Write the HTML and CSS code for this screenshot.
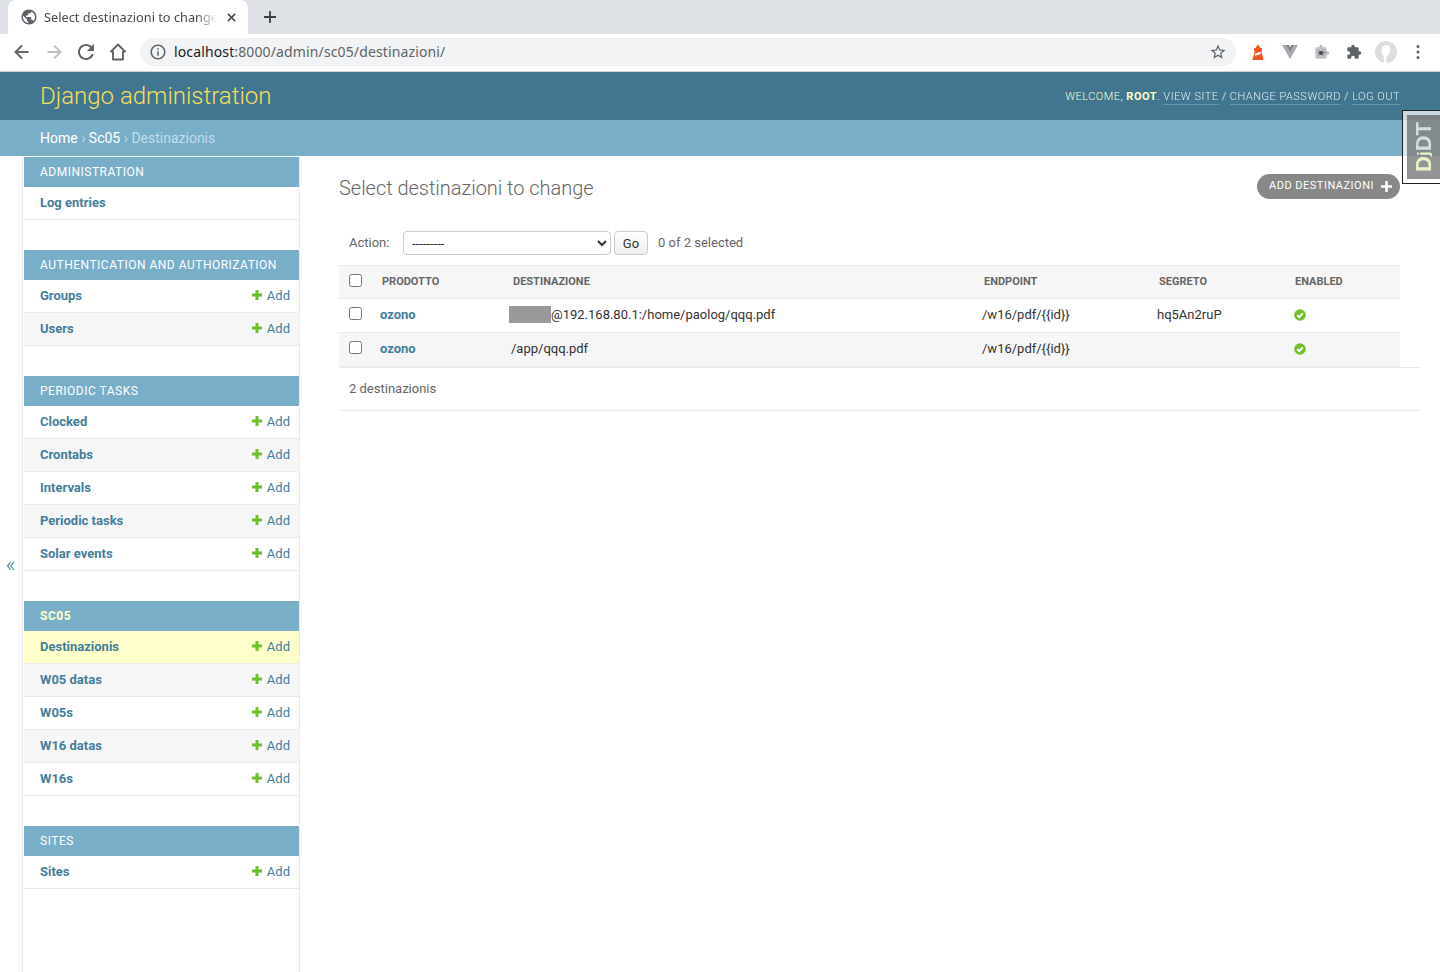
FILE: index.html
```html
<!DOCTYPE html>
<html lang="en">
<head>
<meta charset="utf-8">
<title>Select destinazioni to change</title>
<link rel="stylesheet" href="styles.css">
</head>
<body>
<div class="browser">
  <div class="tabstrip">
    <div class="tab">
      <svg class="favicon" viewBox="0 0 24 24"><path fill="#5f6368" d="M12 2C6.480 2 2 6.480 2 12s4.480 10 10 10 10-4.480 10-10S17.520 2 12 2zm-1 17.930c-3.950-.49-7-3.850-7-7.930 0-.62.08-1.210.21-1.790L9 15v1c0 1.100.9 2 2 2v1.930zm6.900-2.540c-.26-.81-1-1.390-1.900-1.390h-1v-3c0-.55-.45-1-1-1H8v-2h2c.55 0 1-.45 1-1V7h2c1.100 0 2-.9 2-2v-.41c2.930 1.190 5 4.060 5 7.410 0 2.080-.8 3.970-2.100 5.390z"/></svg>
      <span class="tab-title">Select destinazioni to change</span>
      <svg class="tab-close" viewBox="0 0 10 10"><path d="M1 1l8 8M9 1l-8 8" stroke="#45484d" stroke-width="1.700" fill="none"/></svg>
    </div>
    <svg class="new-tab" viewBox="0 0 12 12"><path d="M6 0v12M0 6h12" stroke="#3c4043" stroke-width="1.800" fill="none"/></svg>
  </div>
  <div class="toolbar">
    <svg class="tb-icon" viewBox="0 0 24 24"><path d="M18.500 12H6M12 5.500L5.500 12l6.500 6.500" stroke="#5f6368" stroke-width="1.900" fill="none"/></svg>
    <svg class="tb-icon" viewBox="0 0 24 24"><path d="M5.500 12H18M12 5.500l6.500 6.500-6.500 6.500" stroke="#bdc1c6" stroke-width="1.900" fill="none"/></svg>
    <svg class="tb-icon" viewBox="0 0 24 24"><path fill="#5f6368" d="M17.650 6.350C16.200 4.900 14.210 4 12 4c-4.420 0-7.990 3.580-7.990 8s3.570 8 7.990 8c3.730 0 6.840-2.550 7.730-6h-2.080c-.82 2.330-3.040 4-5.650 4-3.310 0-6-2.690-6-6s2.690-6 6-6c1.660 0 3.140.69 4.220 1.780L13 11h7V4l-2.350 2.350z"/></svg>
    <svg class="tb-icon" viewBox="0 0 24 24"><path d="M12 4.500L5 11.500h2v8h10v-8h2z" stroke="#5f6368" stroke-width="1.900" stroke-linejoin="round" fill="none"/></svg>
    <div class="omnibox">
      <svg class="info" viewBox="0 0 24 24"><path fill="#5f6368" d="M11 7h2v2h-2zm0 4h2v6h-2zm1-9C6.480 2 2 6.480 2 12s4.480 10 10 10 10-4.480 10-10S17.520 2 12 2zm0 18c-4.410 0-8-3.590-8-8s3.590-8 8-8 8 3.590 8 8-3.590 8-8 8z"/></svg>
      <span class="url"><span class="host">localhost</span>:8000/admin/sc05/destinazioni/</span>
      <svg class="star" viewBox="0 0 24 24"><path fill="#5f6368" d="M22 9.240l-7.190-.62L12 2 9.190 8.630 2 9.240l5.460 4.730L5.820 21 12 17.270 18.180 21l-1.630-7.030L22 9.240zM12 15.400l-3.760 2.270 1-4.280-3.320-2.880 4.380-.38L12 6.100l1.710 4.040 4.380.38-3.320 2.880 1 4.280L12 15.400z"/></svg>
    </div>
    <div class="extensions">
      <svg class="ext" viewBox="0 0 16 16"><path fill="#f4511e" d="M6 3l2-2.500L10 3v1h2v2.500h-.8L13.500 16h-11l2.300-9.500H4V4h2z"/><path fill="#fff" d="M5.200 9.500l5.200-1.800.5 2.200-6.200 2.100z"/></svg>
      <svg class="ext" viewBox="0 0 16 16"><path fill="#a6a9ad" d="M0 1h4.500L8 7l3.500-6H16L8 15z"/><path fill="#808488" d="M4 1h2.800L8 3.200 9.200 1H12L8 8z"/></svg>
      <svg class="ext" viewBox="0 0 24 24"><path fill="#bfc1c4" d="M20.500 11H19V7c0-1.100-.9-2-2-2h-4V3.500C13 2.120 11.880 1 10.500 1S8 2.120 8 3.500V5H4c-1.100 0-2 .9-2 2v13c0 1.100.9 2 2 2h13c1.100 0 2-.9 2-2v-4h1.500c1.380 0 2.500-1.120 2.500-2.500S21.880 11 20.500 11z"/><path d="M6 9l4 3M15 9l-4 3M5 13h13M6 18l4-4M15 18l-4-4" stroke="#6a6d71" stroke-width="1.200" fill="none"/><circle cx="10.500" cy="13.500" r="3" fill="#44474b"/></svg>
      <svg class="ext" viewBox="0 0 24 24"><path fill="#5f6368" d="M20.500 11H19V7c0-1.100-.9-2-2-2h-4V3.500C13 2.120 11.880 1 10.500 1S8 2.120 8 3.500V5H4c-1.100 0-1.990.9-1.990 2v3.800H3.500c1.490 0 2.700 1.210 2.700 2.700s-1.210 2.700-2.700 2.700H2V20c0 1.100.9 2 2 2h3.800v-1.500c0-1.490 1.210-2.700 2.700-2.700 1.490 0 2.700 1.210 2.700 2.700V22H17c1.100 0 2-.9 2-2v-4h1.500c1.380 0 2.500-1.120 2.500-2.500S21.880 11 20.500 11z"/></svg>
      <svg class="avatar" viewBox="0 0 22 22"><circle cx="11" cy="11" r="11" fill="#dcdde0"/><path fill="#fff" d="M11 4c3 0 4.500 2.500 4 6-.4 2.800-2 4.500-3.500 5.500-.5 2 0 4.500 0 6.500H9c.5-2.500 0-5-.5-7C7 13 6.300 11 6.500 9 6.800 6 8.500 4 11 4z"/></svg>
      <svg class="menu-dots" viewBox="0 0 4 16"><circle cx="2" cy="2.500" r="1.500" fill="#5f6368"/><circle cx="2" cy="8" r="1.500" fill="#5f6368"/><circle cx="2" cy="13.500" r="1.500" fill="#5f6368"/></svg>
    </div>
  </div>
</div>

<header class="site-header">
  <div class="branding">Django administration</div>
  <div class="user-tools">Welcome, <strong class="user-name">root</strong>. <a class="tool-link" href="#">View site</a> / <a class="tool-link" href="#">Change password</a> / <a class="tool-link" href="#">Log out</a></div>
</header>
<div class="breadcrumbs"><a href="#">Home</a> › <a href="#">Sc05</a> › Destinazionis</div>

<div class="djdt"><div class="djdt-inner"><span class="djdt-text"><span class="djdt-d">D<span class="djdt-j">j</span></span>DT</span></div></div>

<div class="main">
  <div class="toggle"><span>«</span></div>
  <nav class="sidebar">
    <section class="module">
      <h2 class="caption">Administration</h2>
      <div class="row"><a class="model" href="#">Log entries</a></div>
    </section>
    <section class="module">
      <h2 class="caption">Authentication and Authorization</h2>
      <div class="row"><a class="model" href="#">Groups</a><a class="add" href="#"><svg class="plus" viewBox="0 0 10 10"><path d="M3.500 0h3v3.500H10v3H6.500V10h-3V6.500H0v-3h3.500z" fill="#70bf2b"/></svg>Add</a></div>
      <div class="row alt"><a class="model" href="#">Users</a><a class="add" href="#"><svg class="plus" viewBox="0 0 10 10"><path d="M3.500 0h3v3.500H10v3H6.500V10h-3V6.500H0v-3h3.500z" fill="#70bf2b"/></svg>Add</a></div>
    </section>
    <section class="module">
      <h2 class="caption">Periodic Tasks</h2>
      <div class="row"><a class="model" href="#">Clocked</a><a class="add" href="#"><svg class="plus" viewBox="0 0 10 10"><path d="M3.500 0h3v3.500H10v3H6.500V10h-3V6.500H0v-3h3.500z" fill="#70bf2b"/></svg>Add</a></div>
      <div class="row alt"><a class="model" href="#">Crontabs</a><a class="add" href="#"><svg class="plus" viewBox="0 0 10 10"><path d="M3.500 0h3v3.500H10v3H6.500V10h-3V6.500H0v-3h3.500z" fill="#70bf2b"/></svg>Add</a></div>
      <div class="row"><a class="model" href="#">Intervals</a><a class="add" href="#"><svg class="plus" viewBox="0 0 10 10"><path d="M3.500 0h3v3.500H10v3H6.500V10h-3V6.500H0v-3h3.500z" fill="#70bf2b"/></svg>Add</a></div>
      <div class="row alt"><a class="model" href="#">Periodic tasks</a><a class="add" href="#"><svg class="plus" viewBox="0 0 10 10"><path d="M3.500 0h3v3.500H10v3H6.500V10h-3V6.500H0v-3h3.500z" fill="#70bf2b"/></svg>Add</a></div>
      <div class="row"><a class="model" href="#">Solar events</a><a class="add" href="#"><svg class="plus" viewBox="0 0 10 10"><path d="M3.500 0h3v3.500H10v3H6.500V10h-3V6.500H0v-3h3.500z" fill="#70bf2b"/></svg>Add</a></div>
    </section>
    <section class="module">
      <h2 class="caption current">Sc05</h2>
      <div class="row selected"><a class="model" href="#">Destinazionis</a><a class="add" href="#"><svg class="plus" viewBox="0 0 10 10"><path d="M3.500 0h3v3.500H10v3H6.500V10h-3V6.500H0v-3h3.500z" fill="#70bf2b"/></svg>Add</a></div>
      <div class="row alt"><a class="model" href="#">W05 datas</a><a class="add" href="#"><svg class="plus" viewBox="0 0 10 10"><path d="M3.500 0h3v3.500H10v3H6.500V10h-3V6.500H0v-3h3.500z" fill="#70bf2b"/></svg>Add</a></div>
      <div class="row"><a class="model" href="#">W05s</a><a class="add" href="#"><svg class="plus" viewBox="0 0 10 10"><path d="M3.500 0h3v3.500H10v3H6.500V10h-3V6.500H0v-3h3.500z" fill="#70bf2b"/></svg>Add</a></div>
      <div class="row alt"><a class="model" href="#">W16 datas</a><a class="add" href="#"><svg class="plus" viewBox="0 0 10 10"><path d="M3.500 0h3v3.500H10v3H6.500V10h-3V6.500H0v-3h3.500z" fill="#70bf2b"/></svg>Add</a></div>
      <div class="row"><a class="model" href="#">W16s</a><a class="add" href="#"><svg class="plus" viewBox="0 0 10 10"><path d="M3.500 0h3v3.500H10v3H6.500V10h-3V6.500H0v-3h3.500z" fill="#70bf2b"/></svg>Add</a></div>
    </section>
    <section class="module">
      <h2 class="caption">Sites</h2>
      <div class="row"><a class="model" href="#">Sites</a><a class="add" href="#"><svg class="plus" viewBox="0 0 10 10"><path d="M3.500 0h3v3.500H10v3H6.500V10h-3V6.500H0v-3h3.500z" fill="#70bf2b"/></svg>Add</a></div>
    </section>
  </nav>
  <main class="content">
    <div class="title-row">
      <h1 class="page-title">Select destinazioni to change</h1>
      <a class="addlink" href="#">Add destinazioni<svg class="addlink-plus" viewBox="0 0 10 10"><path d="M3.800 0h2.400v3.800H10v2.400H6.200V10H3.800V6.200H0V3.800h3.800z" fill="#fff"/></svg></a>
    </div>
    <div class="actions">
      <label class="action-label" for="action">Action:</label>
      <select class="action-select" id="action"><option>---------</option></select>
      <button class="go" type="button">Go</button>
      <span class="counter">0 of 2 selected</span>
    </div>
    <table class="result">
      <colgroup><col class="c1"><col class="c2"><col class="c3"><col class="c4"><col class="c5"><col></colgroup>
      <thead>
        <tr><th class="check"><input type="checkbox"></th><th>Prodotto</th><th>Destinazione</th><th>Endpoint</th><th>Segreto</th><th class="last">Enabled</th></tr>
      </thead>
      <tbody>
        <tr><td class="check"><input type="checkbox"></td><td><a class="link" href="#">ozono</a></td><td class="dest"><span class="redact"></span>@192.168.80.1:/home/paolog/qqq.pdf</td><td>/w16/pdf/{{id}}</td><td>hq5An2ruP</td><td><svg class="yes" viewBox="0 0 12 12"><circle cx="6" cy="6" r="5.800" fill="#70bf2b"/><path d="M3.200 6.200L5.200 8.200 8.800 4.400" stroke="#fff" stroke-width="1.800" fill="none"/></svg></td></tr>
        <tr class="alt"><td class="check"><input type="checkbox"></td><td><a class="link" href="#">ozono</a></td><td>/app/qqq.pdf</td><td>/w16/pdf/{{id}}</td><td></td><td><svg class="yes" viewBox="0 0 12 12"><circle cx="6" cy="6" r="5.800" fill="#70bf2b"/><path d="M3.200 6.200L5.200 8.200 8.800 4.400" stroke="#fff" stroke-width="1.800" fill="none"/></svg></td></tr>
      </tbody>
    </table>
    <p class="paginator">2 destinazionis</p>
  </main>
</div>
</body>
</html>
```
FILE: styles.css
```css
* { box-sizing: border-box; }
html, body { margin: 0; padding: 0; height: 972px; overflow: hidden; }
body { font-family: Roboto, "Liberation Sans", sans-serif; font-size: 14px; color: #333; background: #fff; position: relative; }
a { text-decoration: none; color: #447e9b; }

.browser { height: 72px; background: #fff; border-bottom: 1px solid #c9d3da; }
.tabstrip { height: 34px; background: #dee1e6; display: flex; align-items: flex-end; padding-left: 8px; }
.tab { width: 240px; height: 34px; background: #fff; border-radius: 8px 8px 0 0; display: flex; align-items: center; padding: 0 11px 0 11.500px; }
.favicon { width: 18px; height: 18px; flex: none; }
.tab-title { font-family: "Noto Sans", sans-serif; font-size: 12.750px; color: #45484d; margin-left: 6.500px; width: 173px; white-space: nowrap; overflow: hidden; -webkit-mask-image: linear-gradient(90deg, #000 88%, transparent 100%); mask-image: linear-gradient(90deg, #000 88%, transparent 100%); }
.tab-close { width: 9px; height: 9px; flex: none; margin-left: 10px; }
.new-tab { width: 12px; height: 12px; margin: 0 0 11px 16px; }
.toolbar { height: 37px; display: flex; align-items: center; padding: 0 0 1px 10px; }
.tb-icon { width: 24px; height: 24px; flex: none; margin-right: 8px; }
.omnibox { width: 1096px; height: 28px; margin-left: 2px; border-radius: 14px; background: #f1f3f4; display: flex; align-items: center; padding: 0 9px 0 9px; }
.info { width: 18px; height: 18px; flex: none; }
.url { font-family: "Noto Sans", sans-serif; font-size: 14px; letter-spacing: .13px; color: #5f6368; margin-left: 7px; flex: 1; padding-bottom: 1px; }
.host { color: #202124; }
.star { width: 18px; height: 18px; flex: none; }
.extensions { display: flex; align-items: center; margin-left: 14px; }
.ext { width: 16px; height: 16px; flex: none; margin-right: 16px; }
.avatar { width: 22px; height: 22px; flex: none; margin-left: -3px; }
.menu-dots { width: 4px; height: 16px; margin-left: 19px; }

.site-header { height: 48px; background: #417690; display: flex; align-items: center; justify-content: space-between; padding: 0 40px; }
.branding { font-size: 24px; font-weight: 300; color: #f5dd5d; }
.user-tools { font-size: 11px; font-weight: 300; letter-spacing: .5px; text-transform: uppercase; color: #ffc; }
.user-name { font-weight: 700; }
.tool-link { color: #fff; opacity: .85; border-bottom: 1px solid rgba(255,255,255,.25); padding-bottom: 1px; }
.breadcrumbs { height: 36px; line-height: 36px; background: #79aec8; color: #c4dce8; padding: 0 40px; font-size: 14px; font-weight: 400; }
.breadcrumbs a { color: #fff; }

.djdt { position: absolute; top: 110px; right: 0; width: 38px; height: 74px; border: 1px solid #222; border-right: 0; background: rgba(255,255,255,.72); padding: 4px 0 4px 4px; }
.djdt-inner { width: 100%; height: 100%; background: rgba(60,60,60,.55); display: flex; align-items: center; justify-content: center; }
.djdt-text { writing-mode: vertical-rl; transform: rotate(180deg); font-family: "Liberation Sans", sans-serif; font-size: 22px; font-weight: 700; line-height: 1; color: #d3dde2; }
.djdt-d { color: #e4f5c8; }
.djdt-j { font-size: 17px; }

.main { display: flex; height: 816px; }
.toggle { width: 23px; flex: none; border-right: 1px solid #eaeaea; display: flex; align-items: center; justify-content: center; color: #447e9b; font-size: 22px; font-weight: 300; padding-right: 1px; }
.sidebar { width: 277px; flex: none; border-right: 1px solid #eaeaea; padding: 1px 0 0 1px; }
.module { margin-bottom: 30px; }
.caption { margin: 0; height: 30px; line-height: 30px; background: #79aec8; color: #fff; font-size: 12px; font-weight: 400; letter-spacing: .5px; text-transform: uppercase; padding-left: 16px; }
.caption.current { font-weight: 700; color: #ffc; }
.row { height: 33px; border-bottom: 1px solid #eaeaea; display: flex; align-items: center; justify-content: space-between; padding: 0 9px 2px 16px; font-size: 13px; }
.row.alt { background: #f6f6f6; }
.row.selected { background: #ffc; }
.model { font-weight: 700; color: #447e9b; }
.add { display: flex; align-items: center; font-weight: 400; }
.plus { width: 10px; height: 10px; margin: 0 5px 0 0; }

.content { flex: 1; min-width: 0; padding: 20px 40px 0 39px; }
.title-row { display: flex; justify-content: space-between; align-items: flex-start; height: 50px; }
.page-title { margin: 0; font-size: 20px; font-weight: 300; letter-spacing: -.03px; color: #666; line-height: 24px; }
.addlink { margin-top: -2px; height: 25px; display: flex; align-items: center; padding: 0 8px 2px 12px; background: #888; border-radius: 15px; color: #fff; font-size: 11px; letter-spacing: .5px; text-transform: uppercase; }
.addlink-plus { width: 11px; height: 11px; margin: 2px 0 0 7px; }
.actions { display: flex; align-items: center; height: 39px; padding: 5px 0 10px 10px; font-size: 13px; color: #666; }
.action-label { width: 54px; padding-bottom: 2px; }
.action-select { width: 208px; height: 24px; font-family: Roboto, sans-serif; font-size: 13px; color: #333; background: #fff; border: 1px solid #ccc; border-radius: 4px; padding: 0 4px; margin: 0; }
.go { width: 34px; height: 24px; margin: 0 0 0 3px; padding: 0; border: 1px solid #ccc; border-radius: 4px; background: linear-gradient(#fff, #efefef); font-family: Roboto, sans-serif; font-size: 13px; color: #333; }
.counter { margin-left: 10px; padding-bottom: 2px; }

.result { width: 1061px; table-layout: fixed; border-collapse: collapse; font-size: 13px; }
.c1 { width: 31px; } .c2 { width: 131px; } .c3 { width: 471px; } .c4 { width: 175px; } .c5 { width: 138px; }
.result th { height: 33px; background: #f6f6f6; border-top: 1px solid #eaeaea; border-bottom: 1px solid #eaeaea; font-size: 11px; font-weight: 700; color: #666; text-align: left; text-transform: uppercase; padding: 0 0 2px 12px; }
.result th.last { padding-left: 10px; }
.result td { height: 34px; border-bottom: 1px solid #eaeaea; padding: 0 0 2px 10px; color: #333; }
.result th.check, .result td.check { padding: 0 0 4px 10px; }
.result tbody tr.alt td { background: #f6f6f6; }
.result input { margin: 0; width: 13px; height: 13px; display: block; }
.result .link { font-weight: 700; }
.result td.dest { padding-left: 8px; }
.redact { display: inline-block; width: 42px; height: 17px; background: #999; vertical-align: -4px; }
.yes { width: 12px; height: 12px; display: block; margin: 1px 0 0 -1px; }
.paginator { margin: 0 -20px 0 0; height: 44px; border-top: 1px solid #eaeaea; border-bottom: 1px solid #eaeaea; padding-left: 10px; line-height: 42px; font-size: 13px; color: #666; }
```
